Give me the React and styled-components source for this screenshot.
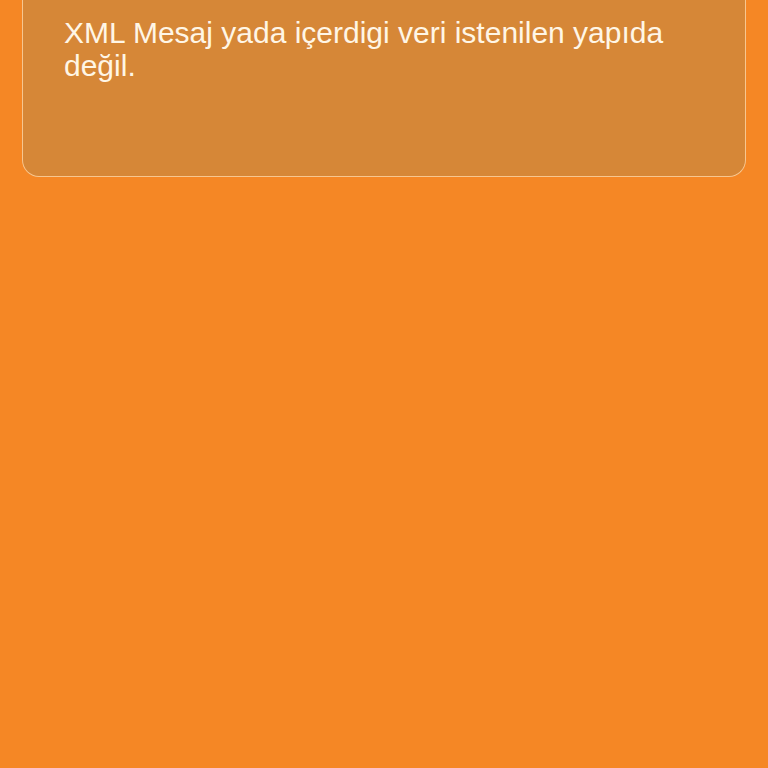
import React from "react"
import styled, { createGlobalStyle } from "styled-components"

const GlobalStyle = createGlobalStyle`
  html, body {
    margin: 0;
    padding: 0;
    background: #f58725;
    height: 100%;
  }
  #root {
    min-height: 100vh;
  }
`

const Screen = styled.div`
  min-height: 100vh;
  background: #f58725;
  padding: 0 22px;
  box-sizing: border-box;
  font-family: "Liberation Sans", Arial, sans-serif;
`

const MessageCard = styled.div`
  box-sizing: border-box;
  height: 177px;
  background: #d68737;
  border: 1.5px solid #f7c68f;
  border-top: none;
  border-radius: 0 0 17px 17px;
  padding: 16px 40px 0 41px;
`

const MessageText = styled.p`
  margin: 0;
  color: #fff6e6;
  font-size: 30px;
  line-height: 33px;
`

export default function App() {
  return (
    <>
      <GlobalStyle />
      <Screen>
        <MessageCard>
          <MessageText>XML Mesaj yada içerdigi veri istenilen yapıda değil.</MessageText>
        </MessageCard>
      </Screen>
    </>
  )
}
